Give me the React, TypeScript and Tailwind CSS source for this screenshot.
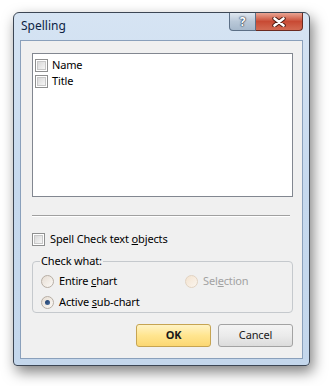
import React from 'react';

const font = { fontFamily: '"Noto Sans", "Open Sans", Arial, sans-serif' };

function CheckBox() {
  return (
    <div className="w-[13px] h-[13px] border border-[#8e8f8f] bg-white p-[1px] shrink-0">
      <div className="w-full h-full border border-[#c8c8c8] bg-gradient-to-br from-[#d9d9d9] to-[#f6f6f6]" />
    </div>
  );
}

function Radio({ checked, disabled }: { checked?: boolean; disabled?: boolean }) {
  return (
    <div
      className={
        'w-[13px] h-[13px] rounded-full border flex items-center justify-center shrink-0 ' +
        (disabled
          ? 'border-[#e2d3c2] bg-gradient-to-br from-[#f3e3d0] to-[#fbf5ee]'
          : 'border-[#b7aea4] bg-gradient-to-br from-[#e6ddd3] to-[#fbf9f6]')
      }
    >
      {checked && <div className="w-[5px] h-[5px] rounded-full bg-gradient-to-br from-[#1b3b6a] to-[#4a6e9e]" />}
    </div>
  );
}

export default function App() {
  return (
    <div className="w-[329px] h-[386px] bg-white pl-[13px] pt-[12px]" style={font}>
      <div className="w-[297px] h-[354px] border border-[#3c4654] rounded-t-[6px] rounded-b-[4px] bg-gradient-to-b from-[#d6e4f3] via-[#c6d9ee] to-[#c4d7ec] px-[6px] pb-[6px] flex flex-col shadow-[3px_6px_14px_rgba(0,0,0,0.5)]">
        {/* title bar */}
        <div className="h-[27px] flex justify-between items-start shrink-0">
          <span className="text-[12px] text-[#0d2444] pl-[1px] pt-[5px] leading-[16px]">Spelling</span>
          <div className="flex">
            <div className="w-[27px] h-[18px] border border-[#5c6f86] border-t-0 rounded-bl-[4px] bg-gradient-to-b from-[#dfe7f0] via-[#b9c8d8] to-[#a7b9cc] flex items-center justify-center">
              <span className="text-white font-bold text-[12px] leading-none [text-shadow:0_0_1px_#2b3a4f,0_0_1px_#2b3a4f,0_0_2px_#2b3a4f]">?</span>
            </div>
            <div className="w-[47px] h-[18px] border border-[#6b2a20] border-t-0 border-l-0 rounded-br-[4px] bg-gradient-to-b from-[#e8a493] via-[#c84a34] to-[#d36a52] flex items-center justify-center">
              <svg width="14" height="10" viewBox="0 0 14 10">
                <path d="M2.5 1.5 L11.5 8.5 M11.5 1.5 L2.5 8.5" stroke="#4a1a10" strokeWidth="4.4" strokeLinecap="round" />
                <path d="M2.5 1.5 L11.5 8.5 M11.5 1.5 L2.5 8.5" stroke="#ffffff" strokeWidth="2.6" strokeLinecap="round" />
              </svg>
            </div>
          </div>
        </div>
        {/* client */}
        <div className="flex-1 border border-[#8aa0bb] bg-[#f0f0f0] pl-[11px] pr-[9px] pt-[12px] pb-[11px] flex flex-col text-[11px] tracking-[-0.15px] text-black">
          <div className="h-[144px] border border-[#828790] bg-white pl-[2px] pt-[3px] flex flex-col">
            <div className="h-[16px] flex items-center gap-[4px]">
              <CheckBox />
              <span>Name</span>
            </div>
            <div className="h-[16px] flex items-center gap-[4px]">
              <CheckBox />
              <span>Title</span>
            </div>
          </div>
          <div className="mt-[18px] mr-[3px] h-[2px] border-t border-[#a0a0a0] border-b border-b-white" />
          <div className="mt-[16px] flex items-center gap-[5px] h-[13px]">
            <CheckBox />
            <span>
              Spell Check text <span className="underline">o</span>bjects
            </span>
          </div>
          <fieldset className="mt-[8px] border border-[#c5c9cd] rounded-[4px] h-[59px] px-[8px]">
            <legend className="px-[1px] ml-[-1px] leading-[14px]">Check what:</legend>
            <div className="flex mt-[5px] h-[16px] items-center">
              <div className="w-[144px] flex items-center gap-[5px]">
                <Radio />
                <span>
                  Entire <span className="underline">c</span>hart
                </span>
              </div>
              <div className="flex items-center gap-[5px] text-[#a2a2a2]">
                <Radio disabled />
                <span>
                  Sel<span className="underline">e</span>ction
                </span>
              </div>
            </div>
            <div className="flex mt-[5px] h-[16px] items-center gap-[5px]">
              <Radio checked />
              <span>
                Active <span className="underline">s</span>ub-chart
              </span>
            </div>
          </fieldset>
          <div className="mt-auto flex justify-end gap-[7px]">
            <button className="w-[75px] h-[23px] rounded-[3px] border border-[#c6a452] bg-gradient-to-b from-[#fff3c4] via-[#ffe58f] to-[#fbd772] font-bold text-[11px] text-[#1a1a1a]">
              OK
            </button>
            <button className="w-[75px] h-[23px] rounded-[3px] border border-[#a3a3a3] bg-gradient-to-b from-[#f4f4f4] via-[#ebebeb] to-[#dcdcdc] text-[11px] text-[#1a1a1a]">
              Cancel
            </button>
          </div>
        </div>
      </div>
    </div>
  );
}
